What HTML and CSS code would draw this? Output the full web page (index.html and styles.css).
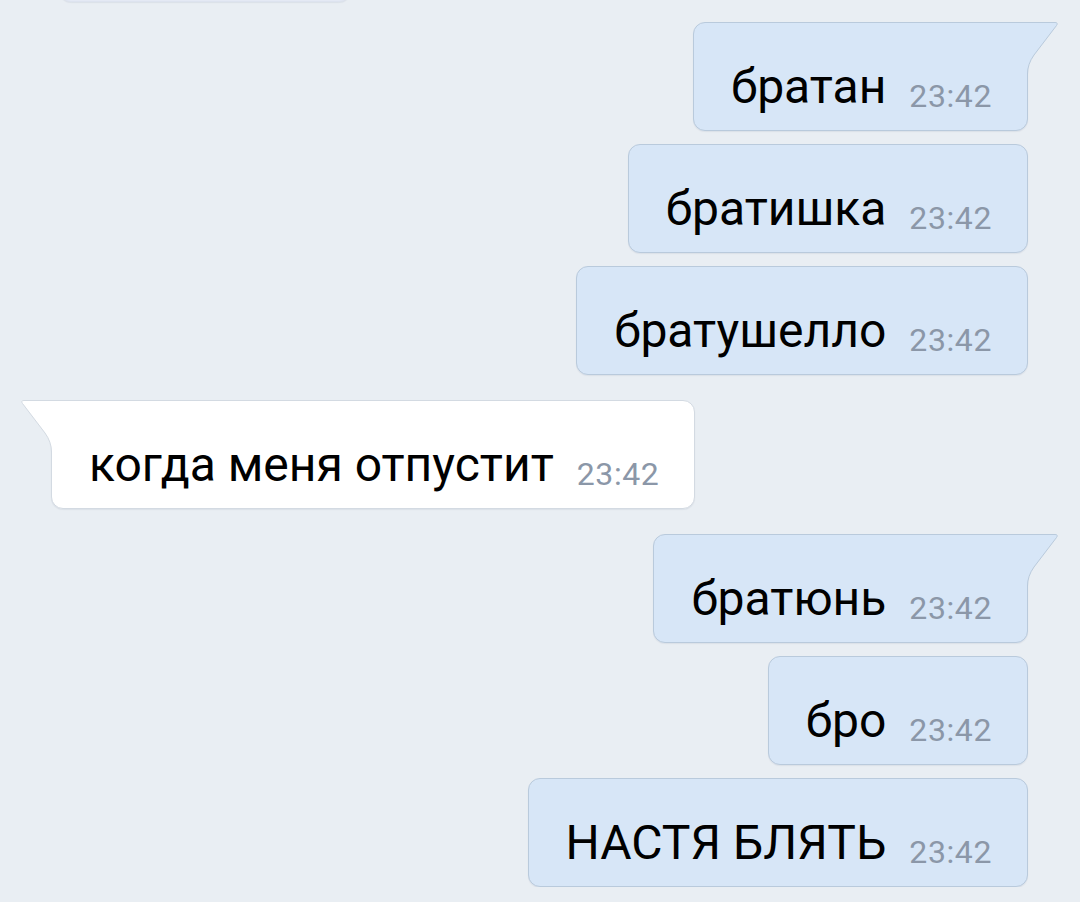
FILE: index.html
```html
<!DOCTYPE html>
<html lang="ru">
<head>
    <meta charset="UTF-8">
    <meta name="viewport" content="width=device-width, initial-scale=1.0">
    <title>Чат</title>
    <link rel="stylesheet" href="styles.css">
</head>
<body>
    <div class="chat">
        <div class="msg in cut"></div>

        <div class="msg out first">
            <svg class="tail" width="40" height="56" viewBox="0 0 40 56"><path class="tail-fill" d="M0 0.5 H36 Q39.5 0.5 37.5 3.5 L15 33 Q8.5 42 8.5 52 V56 H0 Z"/><path class="tail-line" d="M0 0.5 H36 Q39.5 0.5 37.5 3.5 L15 33 Q8.5 42 8.5 52 V56"/></svg>
            <span class="text">братан</span><span class="time">23:42</span>
        </div>
        <div class="msg out"><span class="text">братишка</span><span class="time">23:42</span></div>
        <div class="msg out"><span class="text">братушелло</span><span class="time">23:42</span></div>

        <div class="msg in first">
            <svg class="tail" width="40" height="56" viewBox="0 0 40 56"><path class="tail-fill" d="M0 0.5 H36 Q39.5 0.5 37.5 3.5 L15 33 Q8.5 42 8.5 52 V56 H0 Z"/><path class="tail-line" d="M0 0.5 H36 Q39.5 0.5 37.5 3.5 L15 33 Q8.5 42 8.5 52 V56"/></svg>
            <span class="text">когда меня отпустит</span><span class="time">23:42</span>
        </div>

        <div class="msg out first">
            <svg class="tail" width="40" height="56" viewBox="0 0 40 56"><path class="tail-fill" d="M0 0.5 H36 Q39.5 0.5 37.5 3.5 L15 33 Q8.5 42 8.5 52 V56 H0 Z"/><path class="tail-line" d="M0 0.5 H36 Q39.5 0.5 37.5 3.5 L15 33 Q8.5 42 8.5 52 V56"/></svg>
            <span class="text">братюнь</span><span class="time">23:42</span>
        </div>
        <div class="msg out"><span class="text">бро</span><span class="time">23:42</span></div>
        <div class="msg out"><span class="text">НАСТЯ БЛЯТЬ</span><span class="time">23:42</span></div>
    </div>
</body>
</html>
```

FILE: styles.css
```css
body {
    margin: 0;
    background-color: #e9eef3;
    font-family: Roboto, "Noto Sans", sans-serif;
    color: #000;
    overflow: hidden;
}
.chat {
    display: flex;
    flex-direction: column;
    padding: 0 52px 0 51px;
}
.msg {
    position: relative;
    box-sizing: border-box;
    height: 109px;
    padding: 35px 35px 0 37px;
    border: 1px solid;
    border-radius: 12px;
    font-size: 48px;
    line-height: 57px;
    white-space: nowrap;
    box-shadow: 0 1px 1px rgba(60, 80, 110, 0.08);
    margin-top: 13px;
}
.msg.first {
    margin-top: 25px;
}
.chat > .msg:nth-child(2) {
    margin-top: 20px;
}
.out {
    align-self: flex-end;
    background: #d7e6f7;
    border-color: #b9cadc;
}
.in {
    align-self: flex-start;
    background: #fff;
    border-color: #d3dae2;
}
.msg.cut {
    width: 292px;
    height: 60px;
    margin-top: -58px;
    margin-left: 8px;
    background: #e4e9f4;
    border-color: #dde3ef;
}
.time {
    display: inline-block;
    margin-left: 23px;
    font-size: 32px;
    letter-spacing: 0.6px;
    color: #8b97a8;
    vertical-align: -4px;
    line-height: 1;
}

/* bubble tails */
.tail {
    position: absolute;
    top: -1px;
    display: block;
}
.out.first {
    border-top-right-radius: 0;
}
.out .tail {
    right: -32px;
}
.in.first {
    border-top-left-radius: 0;
}
.in .tail {
    left: -32px;
    transform: scaleX(-1);
}
.out .tail-fill { fill: #d7e6f7; }
.out .tail-line { fill: none; stroke: #b9cadc; stroke-width: 1; }
.in .tail-fill { fill: #fff; }
.in .tail-line { fill: none; stroke: #d3dae2; stroke-width: 1; }
```
